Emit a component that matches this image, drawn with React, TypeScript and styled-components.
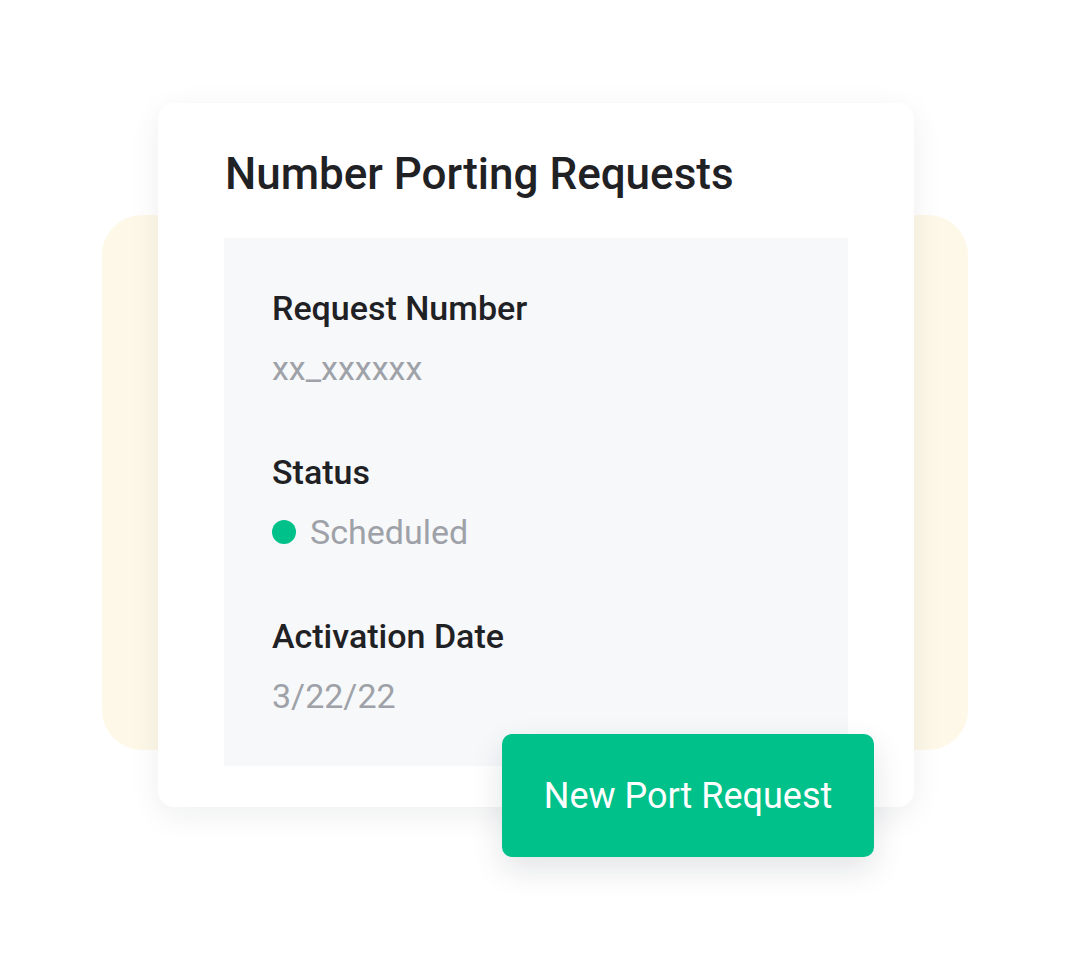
import React from "react";
import styled, { createGlobalStyle } from "styled-components";

const GlobalStyle = createGlobalStyle`
  html, body {
    margin: 0;
    padding: 0;
    background: #ffffff;
  }
  body {
    font-family: Roboto, "Noto Sans", Arial, sans-serif;
    -webkit-font-smoothing: antialiased;
  }
`;

const Stage = styled.div`
  position: relative;
  width: 1072px;
  height: 960px;
  box-sizing: border-box;
  padding: 103px 0 0 158px;
  overflow: hidden;
  background: #ffffff;
`;

const Backdrop = styled.div`
  position: absolute;
  left: 102px;
  top: 215px;
  width: 866px;
  height: 535px;
  border-radius: 40px;
  background: #fef8e8;
`;

const Card = styled.section`
  position: relative;
  width: 756px;
  box-sizing: border-box;
  padding: 45px 66px 41px;
  background: #ffffff;
  border-radius: 16px;
  box-shadow: 0 8px 32px rgba(20, 24, 40, 0.07);
  display: flex;
  flex-direction: column;
  gap: 38px;
`;

const Title = styled.h1`
  margin: 0;
  padding-left: 1px;
  font-size: 44px;
  line-height: 52px;
  font-weight: 500;
  color: #1f2124;
  letter-spacing: 0;
`;

const Panel = styled.div`
  background: #f7f8fa;
  padding: 50px 48px 50px;
  display: flex;
  flex-direction: column;
  gap: 64px;
`;

const Field = styled.div`
  display: flex;
  flex-direction: column;
  gap: 20px;
`;

const Label = styled.div`
  font-size: 34px;
  line-height: 40px;
  font-weight: 500;
  color: #1f2124;
`;

const Value = styled.div`
  display: flex;
  align-items: center;
  gap: 14px;
  font-size: 34px;
  line-height: 40px;
  font-weight: 400;
  color: #9ea2a8;
`;

const Dot = styled.span<{ $color: string }>`
  width: 24px;
  height: 24px;
  border-radius: 50%;
  background: ${(p) => p.$color};
  flex: none;
`;

const ActionButton = styled.button`
  position: absolute;
  right: 40px;
  bottom: -50px;
  width: 372px;
  height: 123px;
  border: none;
  border-radius: 10px;
  background: #01c18b;
  color: #ffffff;
  font-family: Roboto, "Noto Sans", Arial, sans-serif;
  font-size: 36px;
  font-weight: 400;
  cursor: pointer;
  box-shadow: 0 12px 32px rgba(20, 24, 40, 0.12);
`;

export default function App() {
  return (
    <>
      <GlobalStyle />
      <Stage>
        <Backdrop />
        <Card>
          <Title>Number Porting Requests</Title>
          <Panel>
            <Field>
              <Label>Request Number</Label>
              <Value>xx_xxxxxx</Value>
            </Field>
            <Field>
              <Label>Status</Label>
              <Value>
                <Dot $color="#01c18b" />
                Scheduled
              </Value>
            </Field>
            <Field>
              <Label>Activation Date</Label>
              <Value>3/22/22</Value>
            </Field>
          </Panel>
          <ActionButton>New Port Request</ActionButton>
        </Card>
      </Stage>
    </>
  );
}
